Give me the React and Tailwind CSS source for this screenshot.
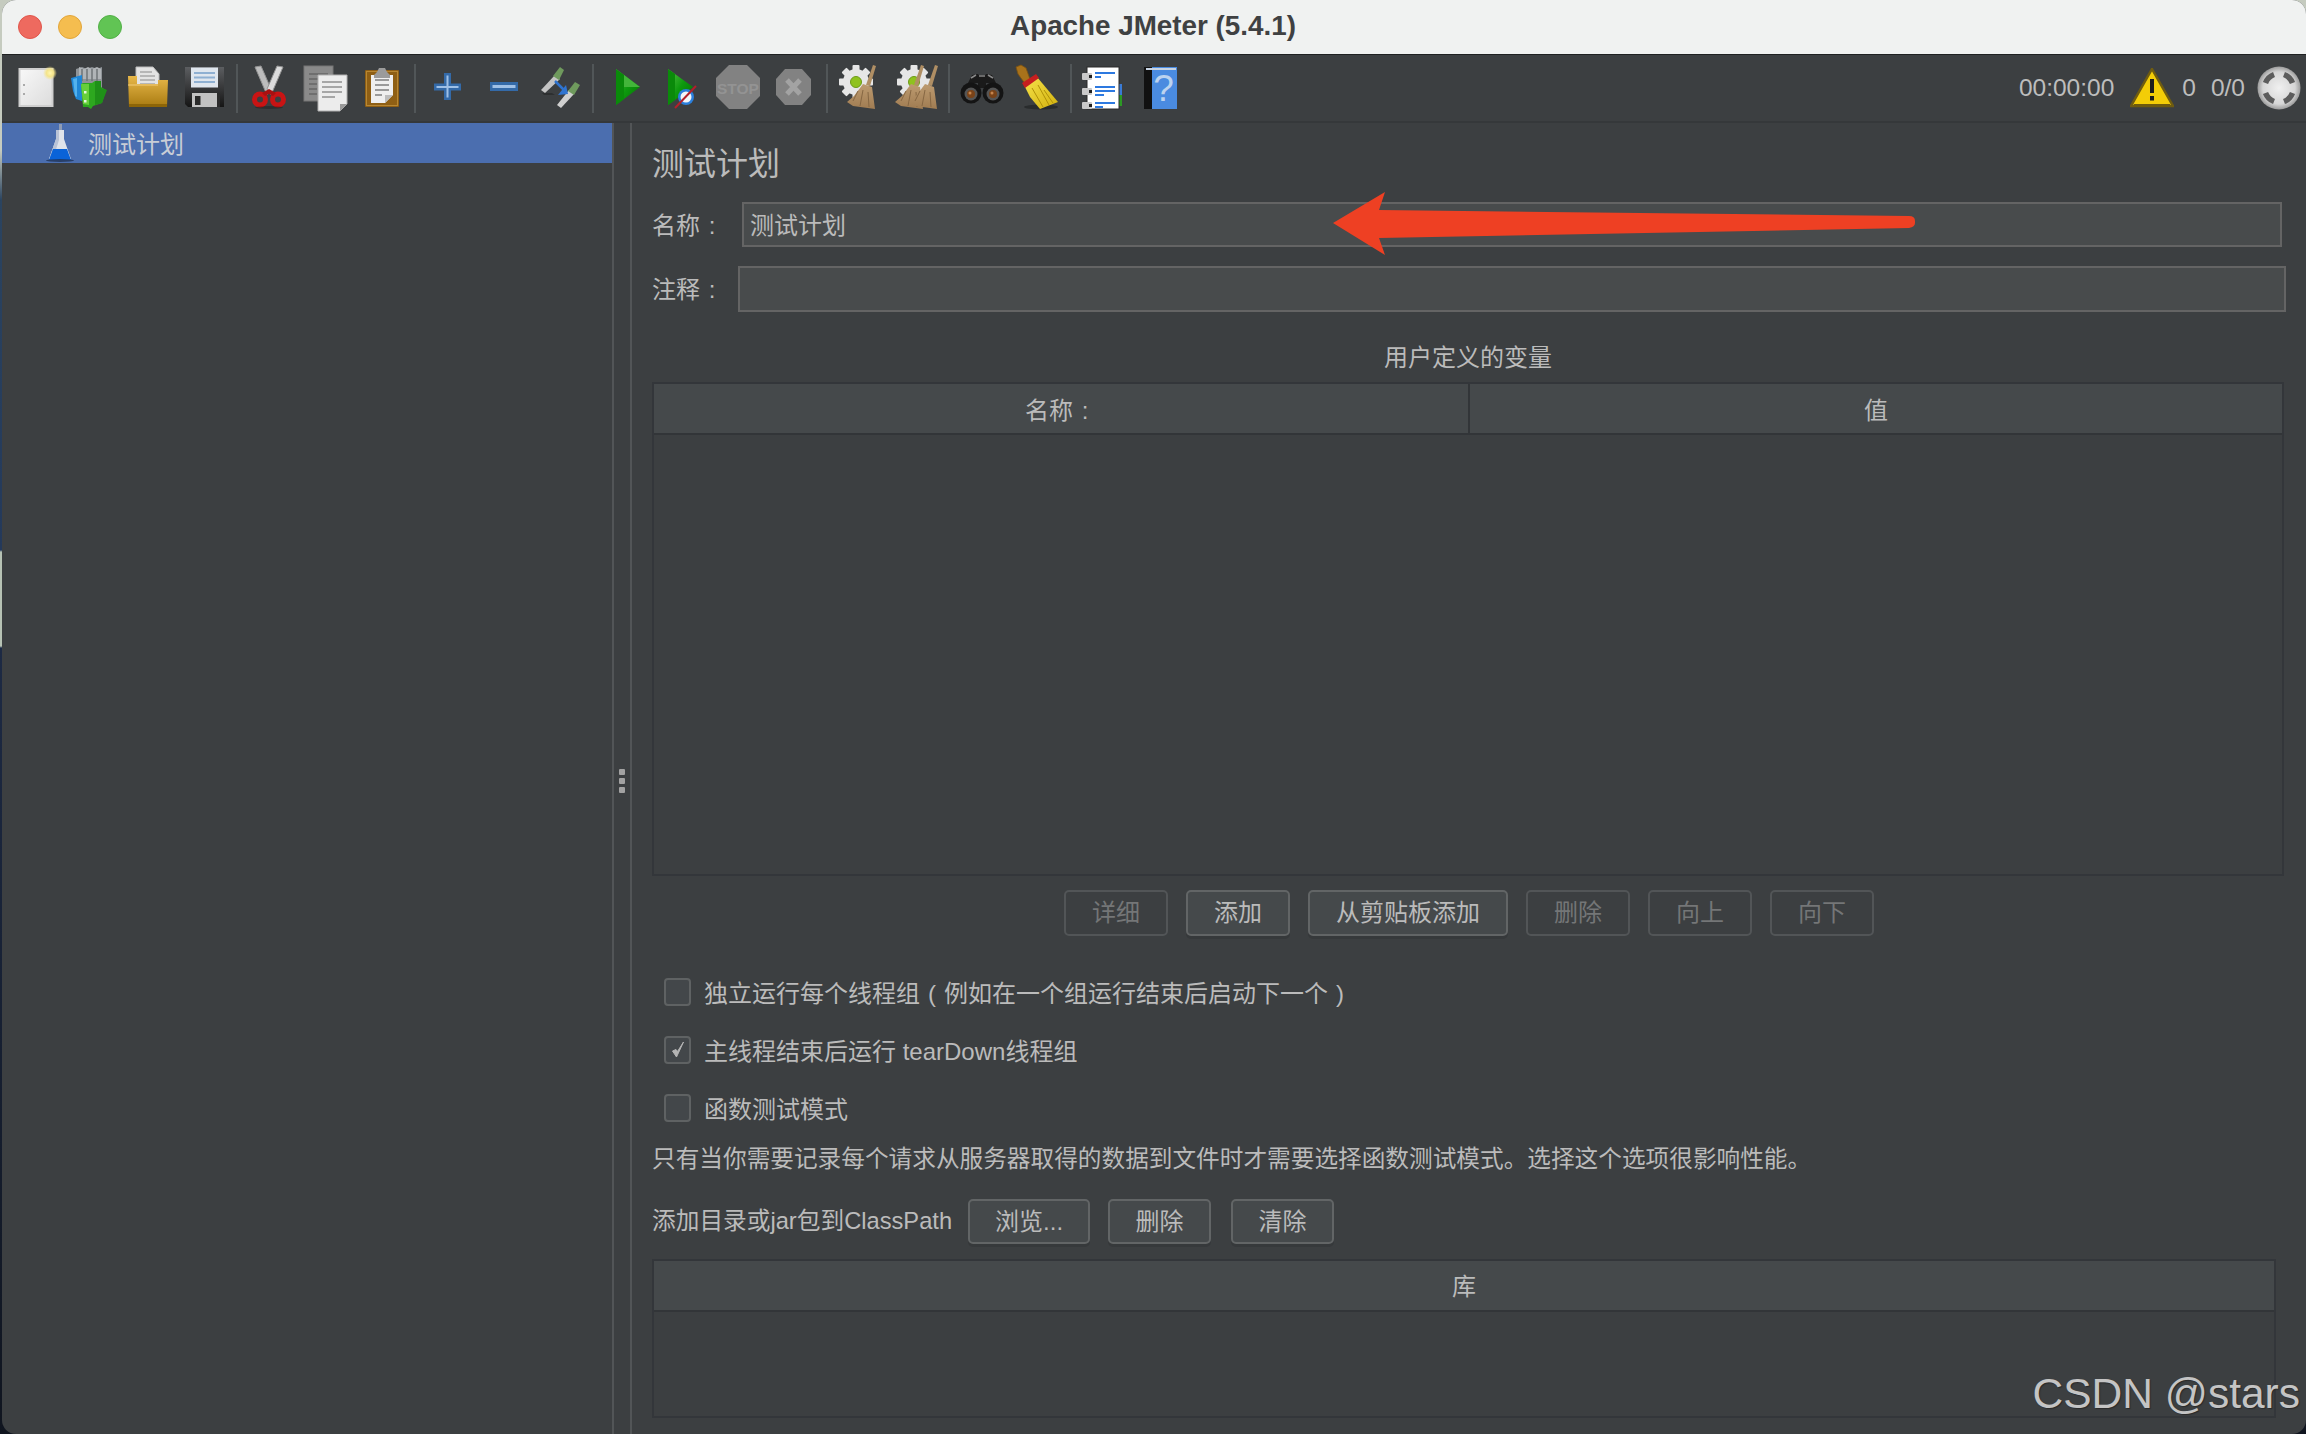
import React from "react";

const Svg = ({ children, ml }) => (
  <svg width="44" height="44" viewBox="0 0 44 44" className={`shrink-0 overflow-visible ${ml}`}>{children}</svg>
);

const NewDoc = () => (<>
  <defs><linearGradient id="nd" x1="0" y1="0" x2="1" y2="1"><stop offset="0" stopColor="#f8f8f8"/><stop offset="1" stopColor="#dcdcdc"/></linearGradient>
  <radialGradient id="ndg"><stop offset="0" stopColor="#fff6b0"/><stop offset=".5" stopColor="#f4e48a"/><stop offset="1" stopColor="#f4e48a" stopOpacity="0"/></radialGradient></defs>
  <rect x="4.5" y="3" width="33" height="37" fill="url(#nd)" stroke="#cfcfcf" strokeWidth="2"/>
  <rect x="8" y="18" width="2" height="2" fill="#aaa"/><rect x="8" y="27" width="2" height="2" fill="#aaa"/>
  <circle cx="35" cy="7" r="7" fill="url(#ndg)"/>
</>);

const TreeIcon = () => (<>
  <path d="M8 3l6-2 5 2 5-2 5 2 5-2v24H8z" fill="#8f9498"/>
  <path d="M11 1l5 2 4-2 4 2 5-2 4 2v10H11z" fill="#b0b4b7"/>
  <path d="M14 3v12M19 3v12M24 3v12M29 3v12" stroke="#6f7477" strokeWidth="1.5"/>
  <path d="M3 12l11-3v26L8 33 5 25z" fill="#1f86d6"/>
  <path d="M5 13l4-1v19l-2-1z" fill="#53b2ee"/>
  <path d="M13 18l2-1h9l3-2h6v6l5 3-4 13-9 3-2 3-3-2H15z" fill="#2da81f"/>
  <path d="M13 18h8v21l-6-1z" fill="#66cf3b"/>
  <path d="M27 15h6v7l6 2-5 13-7 2z" fill="#1f9018"/>
  <rect x="16" y="25" width="2.5" height="2.5" fill="#e7f7df"/><rect x="16" y="34" width="2.5" height="2.5" fill="#e7f7df"/>
</>);

const OpenIcon = () => (<>
  <defs><linearGradient id="op" x1="0" y1="0" x2="0" y2="1"><stop offset="0" stopColor="#e8b84a"/><stop offset="1" stopColor="#a87a10"/></linearGradient></defs>
  <path d="M11 1h17l6 7v16H11z" fill="#e4e4e4" stroke="#bdbdbd"/>
  <path d="M15 6h12M15 10h15M15 14h15M15 18h15" stroke="#a8a8a8" strokeWidth="1.6"/>
  <path d="M3 10h9v8h21v-4h10l-1 27H4z" fill="url(#op)"/>
  <path d="M3 18h30v2H3z" fill="#f0cb74" opacity=".55"/>
  <path d="M4 38h38v3H4z" fill="#8d6508"/>
</>);

const SaveIcon = () => (<>
  <defs><linearGradient id="sv" x1="0" y1="0" x2="0" y2="1"><stop offset="0" stopColor="#5c5e61"/><stop offset="1" stopColor="#151515"/></linearGradient></defs>
  <path d="M3 1h39v40H6l-3-3z" fill="url(#sv)"/>
  <rect x="9" y="1.5" width="27" height="20" fill="#dfe6ee"/>
  <path d="M12 7h21M12 11.500h21M12 16h21" stroke="#8fb0d2" strokeWidth="1.8"/>
  <rect x="10" y="27" width="25" height="14" fill="#c2c2c2"/>
  <rect x="13" y="30" width="5.500" height="9" fill="#2a2a2a"/>
  <rect x="35" y="27" width="3" height="14" fill="#2c2c2c"/>
</>);

const CutIcon = () => (<>
  <path d="M8 1l6-1 10 23-4 6z" fill="#bdbdbd" stroke="#949494"/>
  <path d="M36 1l-6-1-10 23 4 6z" fill="#dcdcdc" stroke="#949494"/>
  <ellipse cx="13" cy="33.500" rx="5.500" ry="5.500" fill="none" stroke="#c91414" strokeWidth="5"/>
  <ellipse cx="31" cy="33.500" rx="5.500" ry="5.500" fill="none" stroke="#c91414" strokeWidth="5"/>
  <path d="M15 27l7-4 7 4-3 3-4-2-4 2z" fill="#a81111"/>
  <ellipse cx="22" cy="41.500" rx="14" ry="1.500" fill="#000" opacity=".25"/>
</>);

const CopyIcon = () => (<>
  <rect x="1" y="0" width="29" height="35" fill="#8a8a8a" stroke="#777"/>
  <path d="M6 8h19M6 13h19M6 18h8M6 23h8M6 28h8" stroke="#6f6f6f" strokeWidth="2"/>
  <path d="M15 9h29v29l-7 7H15z" fill="#ececec" stroke="#b0b0b0"/>
  <path d="M19 16h20M19 21h20M19 26h20M19 31h13" stroke="#a6a6a6" strokeWidth="2"/>
  <path d="M37 45v-7h7z" fill="#9a9a9a"/>
</>);

const PasteIcon = () => (<>
  <rect x="5" y="4" width="34" height="37" rx="1" fill="#8f5f14"/>
  <rect x="6.5" y="5.5" width="31" height="34" fill="none" stroke="#b88732" strokeWidth="1"/>
  <path d="M11 9h22v20l-8 8H11z" fill="#efefef"/>
  <path d="M25 37v-8h8z" fill="#bdbdbd"/>
  <path d="M15 14h14M15 19h14M15 24h14M15 29h7" stroke="#9a9a9a" strokeWidth="1.8"/>
  <path d="M14 9l3-3 2-4h6l2 4 3 3v3H14z" fill="#9b9b9b"/>
</>);

const PlusIcon = () => (<>
  <path d="M18 7h7v10.500h10v7H25V34h-7V24.500H8v-7h10z" fill="#346aa8"/>
  <path d="M20.500 9.500h2v10.500h10v2h-10v9.500h-2V22h-10v-2h10z" fill="#9fc0e6"/>
</>);
const MinusIcon = () => (<>
  <rect x="8" y="16" width="28" height="9" fill="#346aa8"/>
  <rect x="10.500" y="19" width="23" height="3" fill="#9fc0e6"/>
</>);
const ToggleIcon = () => (<>
  <path d="M3 24L17 9l5 4L7 27z" fill="#c4c4c4"/>
  <path d="M15 10l7-9 4 3-5 10z" fill="#6f9a5d"/>
  <path d="M4 27h10l3 2H6z" fill="#000" opacity=".25"/>
  <path d="M19 39L31 24l5 4-13 14z" fill="#d0d0d0"/>
  <path d="M30 25l7-9 5 3-6 10z" fill="#6f9a5d"/>
  <path d="M17 15l9 9" stroke="#2f74d0" strokeWidth="2.500"/>
  <path d="M20 29l10-1-2-9z" fill="#2f74d0"/>
</>);

const PlayGrad = ({ id }) => (
  <defs><linearGradient id={id} x1="0" y1="0" x2="1" y2="1"><stop offset="0" stopColor="#5cc04a"/><stop offset=".5" stopColor="#0d9a0d"/><stop offset="1" stopColor="#056d05"/></linearGradient></defs>
);
const PlayIcon = () => (<>
  <PlayGrad id="pl"/>
  <path d="M11 3l24 18-24 18z" fill="url(#pl)"/>
  <path d="M11 3l8 6v24l-8 6z" fill="#0a8a0a"/>
  <path d="M19 9l16 12H19z" fill="#43b53a"/>
</>);
const PlayNoIcon = () => (<>
  <PlayGrad id="pn"/>
  <path d="M8 3l25 18L8 39z" fill="url(#pn)"/>
  <path d="M8 3l7 5v26l-7 5z" fill="#0a8a0a"/>
  <circle cx="26" cy="31" r="8" fill="#2a7fdc"/>
  <circle cx="26" cy="31" r="5.500" fill="#f3f5f8"/>
  <path d="M15 42L36 20" stroke="#b3202a" strokeWidth="2"/>
</>);
const StopIcon = () => (<>
  <path d="M13-1h18l13 13v18L31 43H13L0 30V12z" fill="#828282"/>
  <text x="22" y="28" textAnchor="middle" fontSize="15.500" fontWeight="700" fill="#939393" fontFamily="Liberation Sans, sans-serif">STOP</text>
</>);
const ShutIcon = () => (<>
  <path d="M14 3h17l9 10v16l-9 10H14L5 29V13z" fill="#828282"/>
  <path d="M16 14l13 14M29 14L16 28" stroke="#a3a3a3" strokeWidth="5"/>
</>);
const Gear = () => (
  <g>
    <g fill="#e6e6e6">
      <circle cx="20" cy="16" r="13"/>
      <rect x="16.500" y="-1" width="7" height="34" rx="1"/>
      <rect x="3" y="12.500" width="34" height="7" rx="1"/>
      <rect x="16.500" y="-1" width="7" height="34" rx="1" transform="rotate(45 20 16)"/>
      <rect x="16.500" y="-1" width="7" height="34" rx="1" transform="rotate(-45 20 16)"/>
    </g>
    <circle cx="20" cy="16" r="5.500" fill="#8fc21e" stroke="#6d9a17"/>
  </g>
);
const Broom = ({ x = 0, id }) => (
  <g transform={`translate(${x} 0)`}>
    <defs><linearGradient id={id} x1="0" y1="0" x2="0" y2="1"><stop offset="0" stopColor="#bd9b70"/><stop offset="1" stopColor="#a07c52"/></linearGradient></defs>
    <path d="M37-1l3 1-6 20-4-1z" fill="#b08f64"/>
    <path d="M27 18l9 3 3 22-22-3-6-4 7-6z" fill={`url(#${id})`}/>
    <path d="M22 25l-5 10M27 24l-3 16M32 26l1 15" stroke="#866743" strokeWidth="1"/>
  </g>
);
const ClearIcon = () => (<><Gear/><Broom id="cb"/></>);
const ClearAllIcon = () => (<><Gear/><Broom x={-10} id="cb1"/><Broom x={4} id="cb2"/></>);
const SearchIcon = () => (<>
  <path d="M8 17l4-8 6-1 2 3h4l2-3 6 1 4 8z" fill="#1a1a1a"/>
  <path d="M11 12l5-3M28 9l5 3" stroke="#8a8a8a" strokeWidth="1.500"/>
  <rect x="18" y="13" width="8" height="9" fill="#1a1a1a"/>
  <path d="M19 10h6" stroke="#6a6a6a" strokeWidth="2"/>
  <circle cx="11" cy="27" r="10.500" fill="#141414"/><circle cx="33" cy="27" r="10.500" fill="#141414"/>
  <circle cx="11" cy="28" r="6.500" fill="#555"/><circle cx="33" cy="28" r="6.500" fill="#555"/>
  <circle cx="11" cy="28" r="4" fill="#7a4318"/><circle cx="33" cy="28" r="4" fill="#7a4318"/>
  <circle cx="10" cy="27" r="1.500" fill="#c4844d"/><circle cx="32" cy="27" r="1.500" fill="#c4844d"/>
</>);
const ResetIcon = () => (<>
  <defs><linearGradient id="rs" x1="0" y1="0" x2="1" y2="1"><stop offset="0" stopColor="#f6e34b"/><stop offset="1" stopColor="#d2b10d"/></linearGradient></defs>
  <ellipse cx="27" cy="41" rx="17" ry="2.500" fill="#000" opacity=".3"/>
  <path d="M2 1l5-2 5 3 5 14-5 3L4 8z" fill="#a8721b" stroke="#7e5310" strokeWidth=".8"/>
  <path d="M10 19l13-8 21 25-18 7-10-12z" fill="url(#rs)"/>
  <path d="M18 22l11 19M24 19l11 20M30 24l9 13" stroke="#b09108" strokeWidth="1"/>
  <path d="M8 17l14-9 3 4-14 10z" fill="#c51f1f"/>
</>);
const FuncIcon = () => (<>
  <rect x="36" y="18" width="5" height="11" fill="#3a7bd5"/><rect x="36" y="29" width="5" height="11" fill="#2c9a24"/>
  <rect x="6" y="1" width="32" height="42" fill="#fff" stroke="#2b2b2b"/>
  <path d="M14 7h20M14 11h6M14 21h20M14 25h20M14 29h9M14 37h20M14 41h8" stroke="#2d79e0" strokeWidth="2"/>
  <rect x="1" y="7" width="10" height="7" rx="1" fill="#c9c9c9"/><rect x="1" y="22" width="10" height="7" rx="1" fill="#c9c9c9"/><rect x="1" y="36" width="10" height="7" rx="1" fill="#c9c9c9"/>
  <rect x="8" y="9" width="3" height="3" fill="#222"/><rect x="8" y="24" width="3" height="3" fill="#222"/><rect x="8" y="38" width="3" height="3" fill="#222"/>
</>);
const HelpIcon = () => (<>
  <rect x="6" y="1" width="33" height="42" fill="#4a8be0"/>
  <rect x="6" y="1" width="8" height="42" fill="#111"/>
  <rect x="8" y="2" width="30" height="2" fill="#c7d3e2"/>
  <text x="25.500" y="35" textAnchor="middle" fontSize="37" fill="#bcd3ef" fontFamily="Liberation Sans, sans-serif">?</text>
</>);

const tools = [
  [NewDoc, "ml-[15px]"], [TreeIcon, "ml-[9px]"], [OpenIcon, "ml-[13px]"], [SaveIcon, "ml-[13px]"], ["sep", "ml-[10px]"],
  [CutIcon, "ml-[9px]"], [CopyIcon, "ml-[12px]"], [PasteIcon, "ml-[13px]"], ["sep", "ml-[10px]"],
  [PlusIcon, "ml-[10px]"], [MinusIcon, "ml-[12px]"], [ToggleIcon, "ml-[12px]"], ["sep", "ml-[10px]"],
  [PlayIcon, "ml-[11px]"], [PlayNoIcon, "ml-[11px]"], [StopIcon, "ml-[12px]"], [ShutIcon, "ml-[11px]"], ["sep", "ml-[11px]"],
  [ClearIcon, "ml-[8px]"], [ClearAllIcon, "ml-[14px]"], ["sep", "ml-[10px]"],
  [SearchIcon, "ml-[10px]"], [ResetIcon, "ml-[10px]"], ["sep", "ml-[12px]"],
  [FuncIcon, "ml-[9px]"], [HelpIcon, "ml-[13px]"],
];

const Colon = () => <span className="inline-block w-[24px] text-center">:</span>;

const Btn = ({ children, off, w }) => (
  <div className={`flex items-center justify-center h-full rounded-[5px] border-2 ${w} ${off
    ? "border-[#525557] bg-[#3c3f41] text-[#747677]"
    : "border-[#626566] bg-[#45494b] text-[#bbbbbb] shadow-[0_3px_0_#36393b]"}`}>{children}</div>
);

const Check = ({ on, children }) => (
  <div className="flex items-center h-[58px] pl-[12px]">
    <div className="flex items-center justify-center w-[27px] h-[28px] rounded-[4px] border-2 border-[#5f6263] bg-[#43474a]">
      {on && (
        <svg width="16" height="20" viewBox="0 0 16 20"><path d="M2.500 11l4 6L13.500 2l-6 9.500-1.500-2z" fill="#b4b4b4" stroke="#b4b4b4" strokeWidth="1"/></svg>
      )}
    </div>
    <span className="ml-[13px] pt-[3px]">{children}</span>
  </div>
);

export default function App() {
  return (
    <div className="relative w-[2306px] h-[1434px] overflow-hidden pl-[2px] bg-[linear-gradient(180deg,#c5cbbf_0,#c5cbbf_150px,#2b4460_200px,#24395a_550px,#b6c2b4_552px,#b6c2b4_646px,#1d2a44_648px,#10151f_100%)] font-['Liberation_Sans','Noto_Sans_CJK_SC',sans-serif] text-[24px] leading-none text-[#bbbbbb]">
      <div className="flex flex-col h-full overflow-hidden rounded-[14px] bg-[#3c3f41]">
        {/* title bar */}
        <div className="grid grid-cols-[1fr_auto_1fr] items-center h-[55px] shrink-0 bg-[#f0f2f1] border-b border-[#1f2122]">
          <div className="flex items-center gap-[16px] pl-[16px]">
            <div className="w-[24px] h-[24px] rounded-full bg-[#ee6a5f] border border-[#e0564b]" />
            <div className="w-[24px] h-[24px] rounded-full bg-[#f5bd4f] border border-[#e2a63a]" />
            <div className="w-[24px] h-[24px] rounded-full bg-[#61c454] border border-[#52b047]" />
          </div>
          <div className="text-[27.800px] font-bold text-[#3f4142] pb-[2px] pr-[2px]">Apache JMeter (5.4.1)</div>
          <div />
        </div>

        {/* toolbar */}
        <div className="flex items-center h-[68px] shrink-0 -ml-[2px] border-b-2 border-[#35383a]">
          {tools.map(([Icon, ml], i) =>
            Icon === "sep"
              ? <div key={i} className={`w-[2px] h-[49px] shrink-0 bg-[#515658] ${ml}`} />
              : <Svg key={i} ml={ml}><Icon /></Svg>
          )}
          <div className="ml-auto flex items-center text-[24.500px] text-[#bdbdbd]">
            <span>00:00:00</span>
            <svg width="44" height="40" viewBox="0 0 44 40" className="ml-[16px]">
              <path d="M22 1l21 37H1z" fill="#f3cd07" stroke="#6f5c10" strokeWidth="2.500" strokeLinejoin="miter"/>
              <path d="M4 36h36v3H4z" fill="#6d5a0f"/>
              <rect x="20" y="11" width="4" height="14" fill="#1d1d1d"/>
              <rect x="20" y="28" width="4" height="4.500" fill="#1d1d1d"/>
            </svg>
            <span className="ml-[8px]">0</span>
            <span className="ml-[15px]">0/0</span>
            <svg width="44" height="44" viewBox="0 0 44 44" className="ml-[12px] mr-[5px]">
              <defs><radialGradient id="gl"><stop offset="0" stopColor="#f0f0f0"/><stop offset=".75" stopColor="#d6d6d6"/><stop offset="1" stopColor="#9c9c9c"/></radialGradient></defs>
              <circle cx="22" cy="22" r="21.500" fill="url(#gl)"/>
              <g stroke="#5c5c5c" strokeWidth="5.500" fill="none">
                <path d="M8.500 17a14.500 14.500 0 0 1 8.500-8.500"/>
                <path d="M27 8.500a14.500 14.500 0 0 1 8.500 8.500"/>
                <path d="M35.500 27a14.500 14.500 0 0 1-8.500 8.500"/>
                <path d="M17 35.500a14.500 14.500 0 0 1-8.500-8.500"/>
              </g>
            </svg>
          </div>
        </div>

        {/* main */}
        <div className="flex flex-1 min-h-0">
          {/* tree */}
          <div className="w-[610px] shrink-0">
            <div className="flex items-center h-[40px] bg-[#4b6eaf] text-[#c8cdd6]">
              <svg width="34" height="40" viewBox="0 0 34 40" className="ml-[41px] overflow-visible">
                <path d="M16 1h3v10h-3z" fill="#8f9cb4"/>
                <path d="M13 7h8v9l7 20H6l7-20z" fill="#dfe3ea"/>
                <path d="M13 7h3v10l-6 19H6l7-20z" fill="#b9c3d6"/>
                <path d="M10 26h14l4 11H6z" fill="#0a63d8"/>
                <ellipse cx="17" cy="37.500" rx="14" ry="1.500" fill="#1f3358" opacity=".8"/>
              </svg>
              <span className="ml-[11px] pt-[3px]">测试计划</span>
            </div>
          </div>

          {/* split handle */}
          <div className="flex flex-col items-center justify-center gap-[3px] w-[20px] shrink-0 border-x-2 border-[#525557] pt-[5px]">
            <div className="w-[6px] h-[6px] bg-[#a2a2a2] rounded-[1px]" />
            <div className="w-[6px] h-[6px] bg-[#a2a2a2] rounded-[1px]" />
            <div className="w-[6px] h-[6px] bg-[#a2a2a2] rounded-[1px]" />
          </div>

          {/* form */}
          <div className="flex-1 min-w-0 flex flex-col pl-[20px]">
            <div className="flex items-center h-[79px] pt-[3px] text-[32px]">测试计划</div>

            <div className="flex items-center h-[45px] mr-[24px]">
              <div className="w-[90px] shrink-0 pt-[3px]">名称<Colon /></div>
              <div className="flex items-center flex-1 h-full pt-[3px] border-2 border-[#646464] bg-[#484b4c] pl-[6px]">测试计划</div>
            </div>
            <div className="flex items-center h-[46px] mt-[19px] mr-[20px]">
              <div className="w-[86px] shrink-0 pt-[2px]">注释<Colon /></div>
              <div className="flex-1 h-full border-2 border-[#646464] bg-[#484b4c]" />
            </div>

            <div className="flex items-center justify-center h-[70px] pt-[22px] mr-[22px] text-center">用户定义的变量</div>

            <div className="flex flex-col h-[494px] mr-[22px] border-2 border-[#33363a]">
              <div className="grid grid-cols-[816px_1fr] h-[51px] bg-[#45494b] border-b-2 border-[#323538]">
                <div className="flex items-center justify-center pt-[4px] border-r-2 border-[#323538]">名称<Colon /></div>
                <div className="flex items-center justify-center pt-[4px]">值</div>
              </div>
            </div>

            <div className="flex justify-center gap-[18px] h-[46px] mt-[14px] mr-[20px]">
              <Btn off w="w-[104px]">详细</Btn>
              <Btn w="w-[104px]">添加</Btn>
              <Btn w="w-[200px]">从剪贴板添加</Btn>
              <Btn off w="w-[104px]">删除</Btn>
              <Btn off w="w-[104px]">向上</Btn>
              <Btn off w="w-[104px]">向下</Btn>
            </div>

            <div className="mt-[27px]">
              <Check>独立运行每个线程组<span className="inline-block w-[24px] text-center">(</span>例如在一个组运行结束后启动下一个<span className="inline-block w-[24px] text-center">)</span></Check>
              <Check on>主线程结束后运行 tearDown线程组</Check>
              <Check>函数测试模式</Check>
            </div>

            <div className="flex items-center h-[46px] text-[23.670px]">只有当你需要记录每个请求从服务器取得的数据到文件时才需要选择函数测试模式。选择这个选项很影响性能。</div>

            <div className="flex items-center h-[45px] mt-[16px]">
              <span className="mr-[16px] pt-[1px] text-[23.700px]">添加目录或jar包到ClassPath</span>
              <Btn w="w-[122px]">浏览...</Btn>
              <div className="w-[18px]" />
              <Btn w="w-[103px]">删除</Btn>
              <div className="w-[20px]" />
              <Btn w="w-[103px]">清除</Btn>
            </div>

            <div className="flex flex-col h-[159px] mt-[15px] mr-[30px] border-2 border-[#33363a]">
              <div className="flex items-center justify-center h-[51px] pt-[3px] bg-[#45494b] border-b-2 border-[#323538]">库</div>
            </div>
          </div>
        </div>
      </div>

      {/* annotation arrow drawn over the screenshot */}
      <svg width="600" height="80" viewBox="1325 185 600 80" className="absolute left-[1325px] top-[185px]">
        <path d="M1333 223l52-31-6 18 530 6q6 0 6 5v2q0 4-6 5l-530 10 6 17z" fill="#ee4023"/>
      </svg>

      <div className="absolute right-[6px] top-[1373px] text-[42.500px] text-[#c4c4c4] [text-shadow:1px_1px_1px_#2a2a2a] whitespace-nowrap">CSDN @stars</div>
    </div>
  );
}
